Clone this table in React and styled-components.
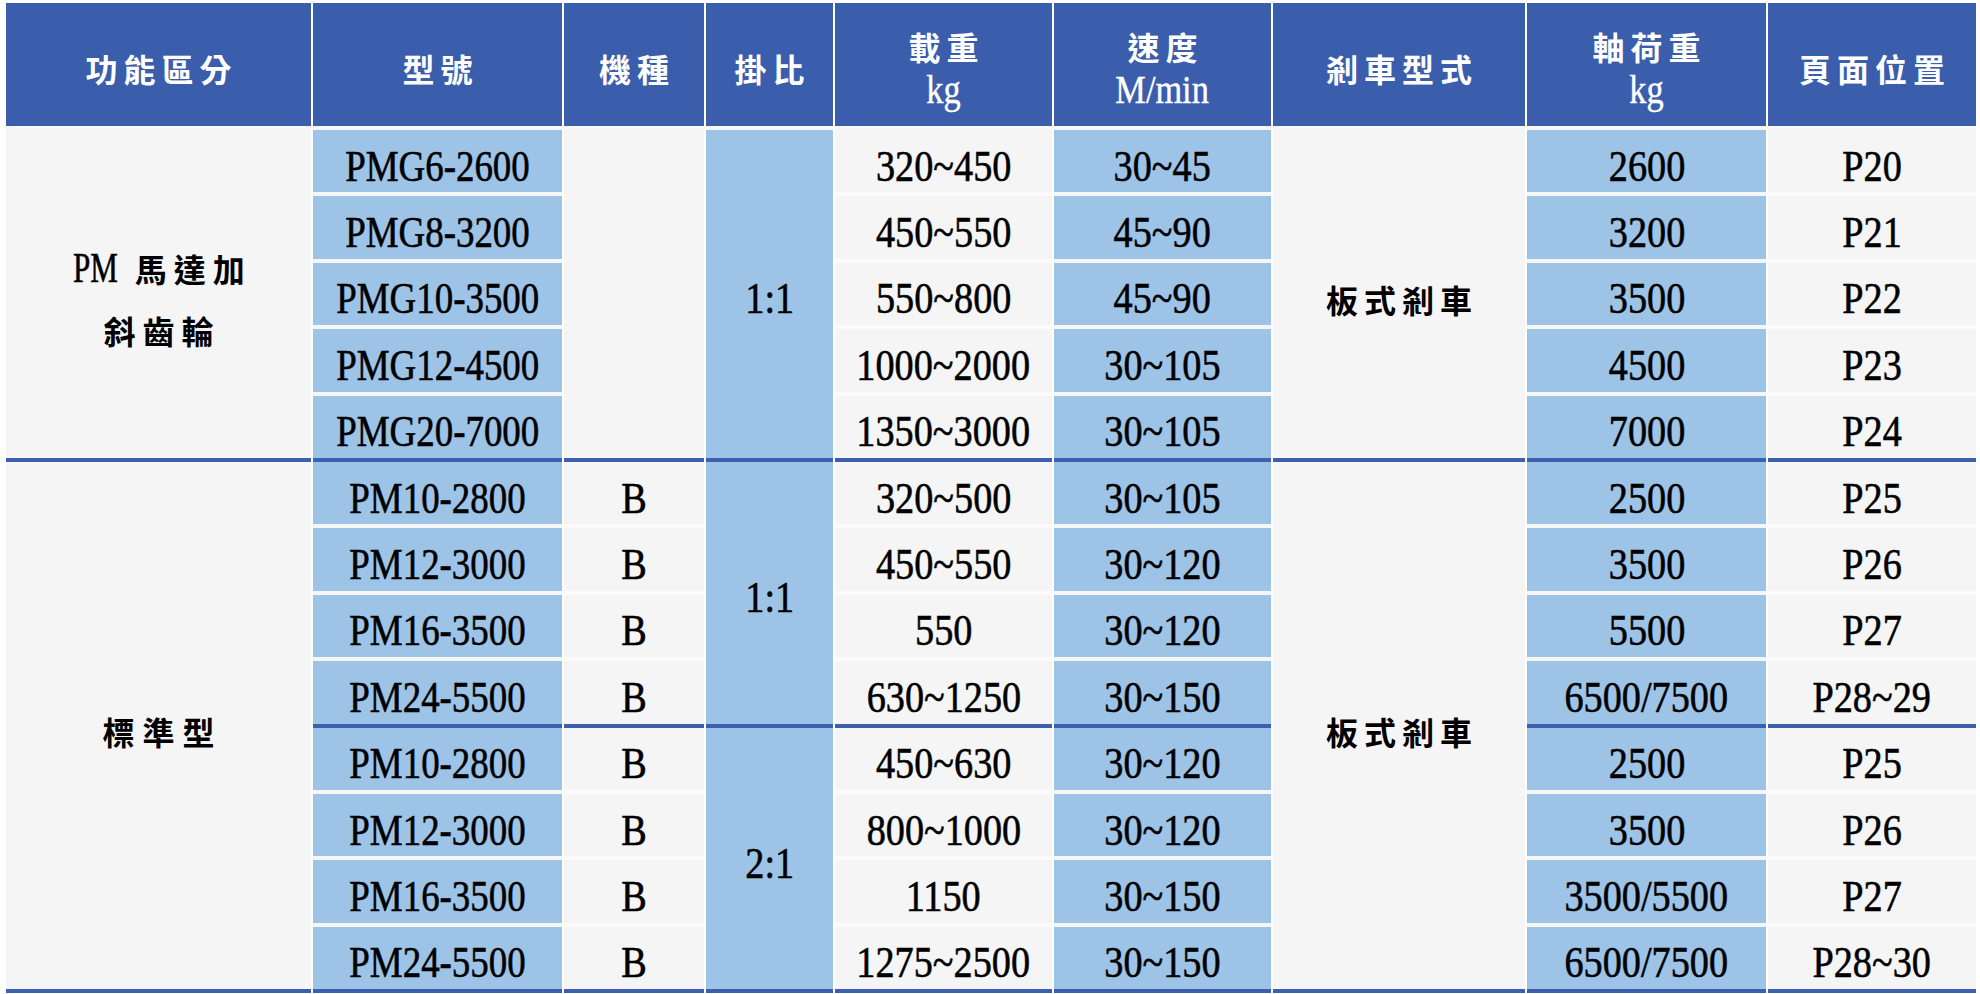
import styled, { createGlobalStyle } from "styled-components";

const GlobalStyle = createGlobalStyle`
  html, body {
    margin: 0;
    background: #fff;
  }
  body {
    font-family: "Liberation Serif", "Noto Sans CJK TC", serif;
  }
`;

const COLS = [305, 249, 140, 127, 217, 217, 252, 239, 208];
const GROUP_ENDS = [4, 8, 12];

const HEADERS = [
  { label: "功能區分" },
  { label: "型號" },
  { label: "機種" },
  { label: "掛比" },
  { label: "載重", unit: "kg" },
  { label: "速度", unit: "M/min" },
  { label: "剎車型式" },
  { label: "軸荷重", unit: "kg" },
  { label: "頁面位置" },
];

// one entry per body row; merged cells only appear on their first row
const ROWS = [
  { func: "pmg", funcSpan: 5, model: "PMG6-2600", kind: "", kindSpan: 5, ratio: "1:1", ratioSpan: 5, load: "320~450", speed: "30~45", brake: "板式剎車", brakeSpan: 5, axle: "2600", page: "P20" },
  { model: "PMG8-3200", load: "450~550", speed: "45~90", axle: "3200", page: "P21" },
  { model: "PMG10-3500", load: "550~800", speed: "45~90", axle: "3500", page: "P22" },
  { model: "PMG12-4500", load: "1000~2000", speed: "30~105", axle: "4500", page: "P23" },
  { model: "PMG20-7000", load: "1350~3000", speed: "30~105", axle: "7000", page: "P24" },
  { func: "std", funcSpan: 8, model: "PM10-2800", kind: "B", ratio: "1:1", ratioSpan: 4, load: "320~500", speed: "30~105", brake: "板式剎車", brakeSpan: 8, axle: "2500", page: "P25" },
  { model: "PM12-3000", kind: "B", load: "450~550", speed: "30~120", axle: "3500", page: "P26" },
  { model: "PM16-3500", kind: "B", load: "550", speed: "30~120", axle: "5500", page: "P27" },
  { model: "PM24-5500", kind: "B", load: "630~1250", speed: "30~150", axle: "6500/7500", page: "P28~29" },
  { model: "PM10-2800", kind: "B", ratio: "2:1", ratioSpan: 4, load: "450~630", speed: "30~120", axle: "2500", page: "P25" },
  { model: "PM12-3000", kind: "B", load: "800~1000", speed: "30~120", axle: "3500", page: "P26" },
  { model: "PM16-3500", kind: "B", load: "1150", speed: "30~150", axle: "3500/5500", page: "P27" },
  { model: "PM24-5500", kind: "B", load: "1275~2500", speed: "30~150", axle: "6500/7500", page: "P28~30" },
];

const Page = styled.div`
  padding: 3px 0 0 6px;
`;

const Grid = styled.div`
  display: grid;
  width: 1970px;
  grid-template-columns: ${COLS.map((w) => w + "px").join(" ")};
  grid-template-rows: 127px repeat(13, 66.4px);
  column-gap: 2px;
  background: #fff;
`;

const Head = styled.div`
  box-sizing: border-box;
  display: flex;
  flex-direction: column;
  align-items: center;
  justify-content: center;
  padding-top: 6px;
  background: #3a5dac;
  border-bottom: 4px solid #f6f6f6;
  color: #fff;
`;

const HeadLabel = styled.span`
  font-family: "Noto Sans CJK TC", sans-serif;
  font-size: 32px;
  font-weight: 700;
  line-height: 44px;
  letter-spacing: 6px;
  padding-left: 6px;
`;

const HeadUnit = styled.span`
  display: inline-block;
  font-family: "Liberation Serif", serif;
  font-size: 39px;
  line-height: 44px;
  -webkit-text-stroke: 0.4px #fff;
  transform: scaleX(0.88);
`;

const Cell = styled.div`
  box-sizing: border-box;
  grid-row: span ${(p) => p.$span || 1};
  display: flex;
  flex-direction: column;
  align-items: center;
  justify-content: center;
  padding-top: 10px;
  background: ${(p) => (p.$blue ? "#9dc3e6" : "#f5f5f5")};
  border-bottom: 4px solid
    ${(p) => (p.$edge ? "#3c5fae" : p.$blue ? "#f6f6f6" : "#fbfbfb")};
  color: #000;
`;

const Num = styled.span`
  display: inline-block;
  font-family: "Liberation Serif", serif;
  font-size: ${(p) => p.$size || 45}px;
  line-height: 1;
  white-space: nowrap;
  -webkit-text-stroke: 0.6px #000;
  transform: scaleX(${(p) => p.$sx || 0.85});
`;

const Cjk = styled.span`
  font-family: "Noto Sans CJK TC", sans-serif;
  font-size: 32px;
  font-weight: 700;
  line-height: 1;
  letter-spacing: ${(p) => p.$ls}px;
  padding-left: ${(p) => p.$ls}px;
  white-space: nowrap;
`;

const FuncLine = styled.div`
  height: 62px;
  display: flex;
  align-items: center;
  justify-content: center;
  gap: 2px;
`;

const FuncText = ({ kind }) =>
  kind === "pmg" ? (
    <>
      <FuncLine>
        <Num $size={42} $sx={0.74}>PM</Num>
        <Cjk $ls={7}>馬達加</Cjk>
      </FuncLine>
      <FuncLine>
        <Cjk $ls={7}>斜齒輪</Cjk>
      </FuncLine>
    </>
  ) : (
    <Cjk $ls={8}>標準型</Cjk>
  );

const renderRow = (r, i) => {
  const cell = (key, content, opts = {}) => {
    const span = opts.span || 1;
    const edge = GROUP_ENDS.includes(i + span - 1);
    return (
      <Cell key={`${i}-${key}`} $span={span} $blue={opts.blue} $edge={edge}>
        {content}
      </Cell>
    );
  };

  const out = [];
  if (r.func) out.push(cell("func", <FuncText kind={r.func} />, { span: r.funcSpan }));
  out.push(cell("model", <Num $sx={0.82}>{r.model}</Num>, { blue: true }));
  if (r.kind !== undefined) out.push(cell("kind", <Num>{r.kind}</Num>, { span: r.kindSpan }));
  if (r.ratio) out.push(cell("ratio", <Num>{r.ratio}</Num>, { blue: true, span: r.ratioSpan }));
  out.push(cell("load", <Num>{r.load}</Num>));
  out.push(cell("speed", <Num>{r.speed}</Num>, { blue: true }));
  if (r.brake) out.push(cell("brake", <Cjk $ls={6}>{r.brake}</Cjk>, { span: r.brakeSpan }));
  out.push(cell("axle", <Num>{r.axle}</Num>, { blue: true }));
  out.push(cell("page", <Num>{r.page}</Num>));
  return out;
};

const App = () => {
  return (
    <Page>
      <GlobalStyle />
      <Grid>
        {HEADERS.map((h) => (
          <Head key={h.label}>
            <HeadLabel>{h.label}</HeadLabel>
            {h.unit && <HeadUnit>{h.unit}</HeadUnit>}
          </Head>
        ))}
        {ROWS.flatMap(renderRow)}
      </Grid>
    </Page>
  );
};

export default App;
